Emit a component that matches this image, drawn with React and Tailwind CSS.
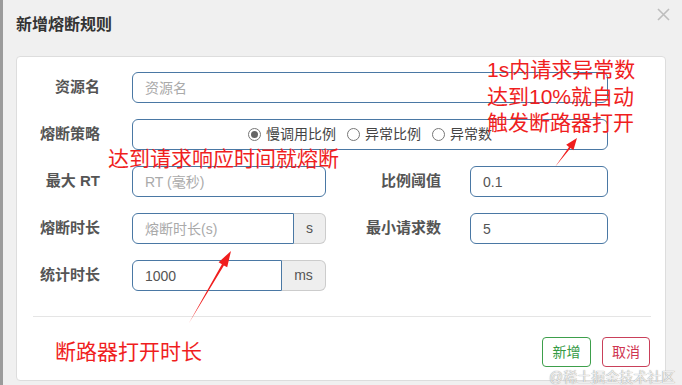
import React from "react";

const Radio = ({ label, checked }) => (
  <label className="flex items-center gap-[5px]">
    <span className="w-[13px] h-[13px] rounded-full border border-[#777] bg-white flex items-center justify-center">
      {checked && <span className="w-[7px] h-[7px] rounded-full bg-[#666]" />}
    </span>
    <span>{label}</span>
  </label>
);

const Label = ({ children, className = "" }) => (
  <div className={`text-right font-bold text-[15px] text-[#555] ${className}`}>{children}</div>
);

const inputCls =
  "h-[31px] border border-[#4a78a4] bg-white pl-3 text-[14px] text-[#555] placeholder:text-[#aaa] outline-none";

const AddonInput = ({ placeholder, value, addon, addonW }) => (
  <div className="flex h-[31px] w-[194px]">
    <input
      className={`${inputCls} flex-1 min-w-0 rounded-l-md`}
      placeholder={placeholder}
      defaultValue={value}
    />
    <span
      className={`${addonW} flex items-center justify-center border border-l-0 border-[#ccc] bg-[#eee] rounded-r-md text-[14px] text-[#555]`}
    >
      {addon}
    </span>
  </div>
);

const Arrows = () => (
  <svg className="absolute left-0 top-0 pointer-events-none" width="682" height="385">
    <polygon
      fill="#f01e1e"
      points="555,167 569,146.9 566.2,144.8 577,138 573.4,150.2 570.6,148.1"
    />
    <polygon
      fill="#f01e1e"
      points="189,323 221.9,264.2 218.6,262.3 231,251 227.2,267.3 223.9,265.4"
    />
  </svg>
);

export default function App() {
  return (
    <div
      className="w-[682px] h-[385px] relative overflow-hidden bg-[#f0f0f0] flex"
      style={{ fontFamily: '"Liberation Sans", "Noto Sans CJK SC", sans-serif' }}
    >
      <div className="w-[3px] h-full bg-[#9b9b9b]" />
      <div className="flex-1 pl-[13px] pr-[16px]">
        <h2 className="mt-[14px] leading-[22px] text-[16px] font-bold text-[#333]">新增熔断规则</h2>

        <div className="mt-[20px] h-[325px] bg-white border border-[#ddd] rounded flex flex-col">
          <div className="pt-[15px] flex flex-col gap-[16px]">
            <div className="flex items-center">
              <Label className="w-[83px]">资源名</Label>
              <input className={`${inputCls} ml-[32px] w-[476px] rounded-md`} placeholder="资源名" />
            </div>

            <div className="flex items-center">
              <Label className="w-[83px]">熔断策略</Label>
              <div className="ml-[32px] w-[476px] h-[31px] border border-[#4a78a4] rounded-md flex items-center justify-center gap-[11px] text-[14px] text-[#444]">
                <Radio label="慢调用比例" checked />
                <Radio label="异常比例" />
                <Radio label="异常数" />
              </div>
            </div>

            <div className="flex items-center">
              <Label className="w-[83px]">最大 RT</Label>
              <input className={`${inputCls} ml-[32px] w-[194px] rounded-md`} placeholder="RT (毫秒)" />
              <Label className="w-[115px]">比例阈值</Label>
              <input className={`${inputCls} ml-[29px] w-[138px] rounded-md`} defaultValue="0.1" />
            </div>

            <div className="flex items-center">
              <Label className="w-[83px]">熔断时长</Label>
              <div className="ml-[32px]">
                <AddonInput placeholder="熔断时长(s)" addon="s" addonW="w-[32px]" />
              </div>
              <Label className="w-[115px]">最小请求数</Label>
              <input className={`${inputCls} ml-[29px] w-[138px] rounded-md`} defaultValue="5" />
            </div>

            <div className="flex items-center">
              <Label className="w-[83px]">统计时长</Label>
              <div className="ml-[32px]">
                <AddonInput value="1000" addon="ms" addonW="w-[44px]" />
              </div>
            </div>
          </div>

          <div className="mt-[25px] ml-[16px] mr-[14px] h-px bg-[#e5e5e5]" />

          <div className="mt-[20px] pr-[15px] flex justify-end gap-[11px] text-[14px]">
            <button className="w-[49px] h-[30px] rounded border border-[#3d9f4b] text-[#359a44]">新增</button>
            <button className="w-[48px] h-[30px] rounded border border-[#c9405a] text-[#cf3550]">取消</button>
          </div>
        </div>
      </div>

      <button className="absolute left-[655px] top-[6px] w-[16px] h-[16px] flex items-center justify-center">
        <svg width="13" height="13" viewBox="0 0 13 13">
          <path d="M1 1 L12 12 M12 1 L1 12" stroke="#bdbdbd" strokeWidth="1.6" />
        </svg>
      </button>

      <div className="absolute left-[487px] top-[57px] text-[21px] leading-[26.5px] text-[#f01e1e]">
        <div>1s内请求异常数</div>
        <div>达到10%就自动</div>
        <div>触发断路器打开</div>
      </div>
      <div className="absolute left-[108px] top-[146px] text-[21px] leading-[26px] text-[#f01e1e]">
        达到请求响应时间就熔断
      </div>
      <div className="absolute left-[55px] top-[339px] text-[21px] leading-[26px] text-[#f01e1e]">
        断路器打开时长
      </div>

      <Arrows />

      <div className="absolute left-[549px] top-[368px] text-[14px] leading-[18px] text-[#eeeeee] [text-shadow:0_0_1px_#7a7a7a]">
        @稀土掘金技术社区
      </div>
    </div>
  );
}
